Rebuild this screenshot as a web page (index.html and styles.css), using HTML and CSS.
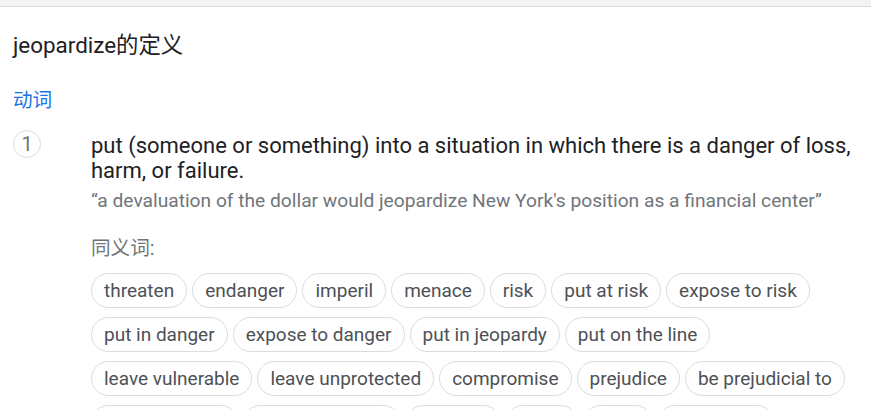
FILE: index.html
```html
<!DOCTYPE html>
<html lang="zh-CN">
<head>
<meta charset="utf-8">
<title>jeopardize的定义</title>
<link rel="stylesheet" href="styles.css">
</head>
<body>
<div class="topbar"></div>
<main class="page">
  <h1 class="title">jeopardize的定义</h1>
  <div class="pos">动词</div>
  <section class="sense">
    <div class="num">1</div>
    <div class="body">
      <div class="def">put (someone or something) into a situation in which there is a danger of loss, harm, or failure.</div>
      <div class="example">“a devaluation of the dollar would jeopardize New York's position as a financial center”</div>
      <div class="syn-label">同义词:</div>
      <div class="chips">
        <span class="chip">threaten</span>
        <span class="chip">endanger</span>
        <span class="chip">imperil</span>
        <span class="chip">menace</span>
        <span class="chip">risk</span>
        <span class="chip">put at risk</span>
        <span class="chip">expose to risk</span>
        <span class="chip">put in danger</span>
        <span class="chip">expose to danger</span>
        <span class="chip">put in jeopardy</span>
        <span class="chip">put on the line</span>
        <span class="chip">leave vulnerable</span>
        <span class="chip">leave unprotected</span>
        <span class="chip">compromise</span>
        <span class="chip">prejudice</span>
        <span class="chip">be prejudicial to</span>
        <span class="chip">be a danger to</span>
        <span class="chip">pose a threat to</span>
        <span class="chip">damage</span>
        <span class="chip">injure</span>
        <span class="chip">harm</span>
        <span class="chip">undermine</span>
      </div>
    </div>
  </section>
</main>
</body>
</html>
```
FILE: styles.css
```css
html, body {
  margin: 0;
  padding: 0;
  background: #ffffff;
  overflow: hidden;
}
body {
  font-family: Roboto, "Noto Sans CJK SC", sans-serif;
  color: #202124;
}
.topbar {
  height: 6px;
  background: #f3f3f3;
  border-bottom: 1px solid #dcdcdc;
}
.page {
  padding: 0 0 0 13px;
}
.title {
  margin: 23px 0 0;
  font-size: 22.4px;
  line-height: 30px;
  font-weight: 400;
  color: #202124;
}
.pos {
  margin-top: 26.5px;
  font-size: 19.6px;
  line-height: 28px;
  color: #1a73e8;
}
.sense {
  display: flex;
  align-items: flex-start;
  margin-top: 15px;
}
.num {
  flex: none;
  box-sizing: border-box;
  width: 28px;
  height: 28px;
  border: 1px solid #dadce0;
  border-radius: 50%;
  display: flex;
  align-items: center;
  justify-content: center;
  font-size: 20px;
  line-height: 1;
  color: #70757a;
}
.body {
  margin-left: 50px;
  padding-top: 3px;
  flex: 1;
}
.def {
  font-size: 22px;
  line-height: 25.7px;
  color: #202124;
}
.example {
  margin-top: 4px;
  font-size: 19.2px;
  line-height: 26px;
  color: #70757a;
}
.syn-label {
  margin-top: 21px;
  font-size: 19.6px;
  line-height: 28px;
  color: #70757a;
}
.chips {
  margin-top: 10px;
  display: flex;
  flex-wrap: wrap;
  column-gap: 5px;
  row-gap: 9px;
}
.chip {
  box-sizing: border-box;
  height: 35px;
  padding: 0 12px;
  border: 1px solid #dadce0;
  border-radius: 18px;
  display: flex;
  align-items: center;
  font-size: 19px;
  color: #4d5156;
  white-space: nowrap;
}
```
